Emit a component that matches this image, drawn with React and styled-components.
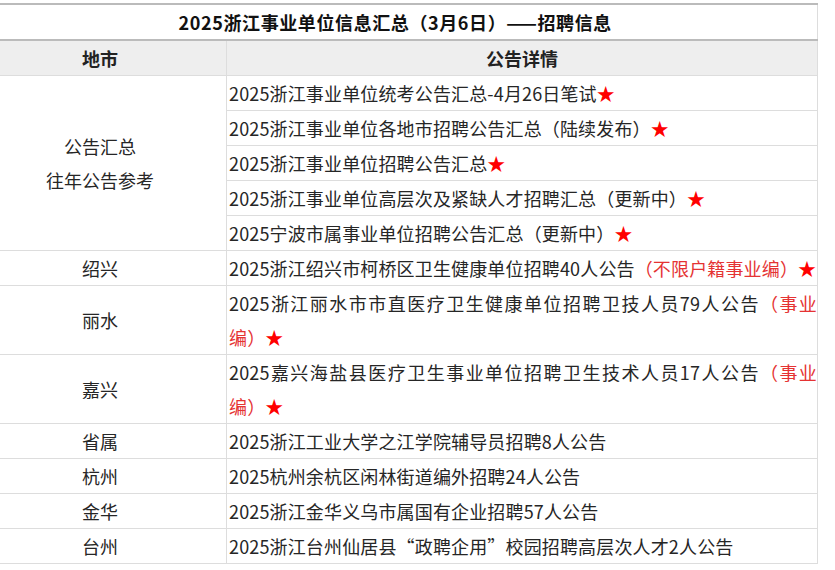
import React from "react";
import styled, { createGlobalStyle } from "styled-components";

const Global = createGlobalStyle`
  html, body { margin: 0; padding: 0; background: #fff; }
  body { font-family: "Noto Sans CJK SC", "Noto Sans", sans-serif; overflow: hidden; }
`;

const Page = styled.div`
  width: 835px;
  height: 570px;
  overflow: hidden;
  padding-top: 3px;
  box-sizing: border-box;
`;

const Table = styled.table`
  border-collapse: collapse;
  table-layout: fixed;
  width: 845px;
  margin-left: -27px;
  font-size: 18px;
  color: #262626;
`;

const TitleCell = styled.td`
  border-top: 2px solid #bbb;
  border-bottom: 2px solid #bbb;
  border-right: 1px solid #ddd;
  height: 34px;
  padding: 0;
  line-height: 34px;
  text-align: center;
  font-weight: bold;
  letter-spacing: 0.6px;
  color: #111;
`;

const HeadCell = styled.th`
  background: #eeeeee;
  border: 1px solid #ddd;
  border-top: 2px solid #bbb;
  height: 34px;
  padding: 0;
  line-height: 34px;
  text-align: center;
  font-weight: bold;
  color: #222;
`;

const CityCell = styled.td`
  border: 1px solid #ddd;
  padding: 0;
  line-height: 34px;
  text-align: center;
  vertical-align: middle;
`;

const InfoCell = styled.td`
  border: 1px solid #ddd;
  padding: 0 0 0 2px;
  line-height: 34px;
  text-align: left;
  white-space: nowrap;
  overflow: hidden;
  letter-spacing: 0.15px;
`;

const Line = styled.div`
  white-space: normal;
  text-align: ${(p) => (p.$justify ? "justify" : "left")};
  text-align-last: ${(p) => (p.$justify ? "justify" : "auto")};
`;

const Red = styled.span`
  color: #e53333;
`;

const Star = styled.span`
  color: #f00;
`;

const groupItems = [
  "2025浙江事业单位统考公告汇总-4月26日笔试",
  "2025浙江事业单位各地市招聘公告汇总（陆续发布）",
  "2025浙江事业单位招聘公告汇总",
  "2025浙江事业单位高层次及紧缺人才招聘汇总（更新中）",
  "2025宁波市属事业单位招聘公告汇总（更新中）",
];

const rows = [
  {
    city: "绍兴",
    content: (
      <>
        2025浙江绍兴市柯桥区卫生健康单位招聘40人公告<Red>（不限户籍事业编）</Red>
        <Star>★</Star>
      </>
    ),
  },
  {
    city: "丽水",
    content: (
      <>
        <Line $justify>
          2025浙江丽水市市直医疗卫生健康单位招聘卫技人员79人公告<Red>（事业</Red>
        </Line>
        <Line>
          <Red>编）</Red>
          <Star>★</Star>
        </Line>
      </>
    ),
  },
  {
    city: "嘉兴",
    content: (
      <>
        <Line $justify>
          2025嘉兴海盐县医疗卫生事业单位招聘卫生技术人员17人公告<Red>（事业</Red>
        </Line>
        <Line>
          <Red>编）</Red>
          <Star>★</Star>
        </Line>
      </>
    ),
  },
  { city: "省属", content: "2025浙江工业大学之江学院辅导员招聘8人公告" },
  { city: "杭州", content: "2025杭州余杭区闲林街道编外招聘24人公告" },
  { city: "金华", content: "2025浙江金华义乌市属国有企业招聘57人公告" },
  { city: "台州", content: "2025浙江台州仙居县“政聘企用”校园招聘高层次人才2人公告" },
];

export default function App() {
  return (
    <Page>
      <Global />
      <Table>
        <colgroup>
          <col style={{ width: "253px" }} />
          <col />
        </colgroup>
        <tbody>
          <tr>
            <TitleCell colSpan={2}>2025浙江事业单位信息汇总（3月6日）——招聘信息</TitleCell>
          </tr>
          <tr>
            <HeadCell>地市</HeadCell>
            <HeadCell>公告详情</HeadCell>
          </tr>
          {groupItems.map((text, i) => (
            <tr key={text}>
              {i === 0 && (
                <CityCell rowSpan={groupItems.length}>
                  公告汇总
                  <br />
                  往年公告参考
                </CityCell>
              )}
              <InfoCell>
                {text}
                <Star>★</Star>
              </InfoCell>
            </tr>
          ))}
          {rows.map((r) => (
            <tr key={r.city}>
              <CityCell>{r.city}</CityCell>
              <InfoCell>{r.content}</InfoCell>
            </tr>
          ))}
        </tbody>
      </Table>
    </Page>
  );
}
